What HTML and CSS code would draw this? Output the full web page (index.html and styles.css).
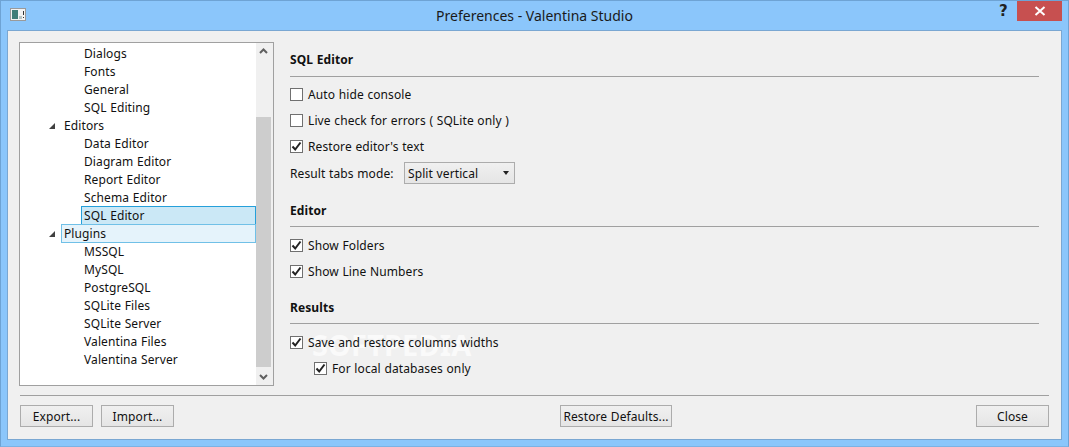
FILE: index.html
```html
<!DOCTYPE html>
<html lang="en">
<head>
<meta charset="utf-8">
<title>Preferences - Valentina Studio</title>
<link rel="stylesheet" href="styles.css">
</head>
<body>
<div class="window">
  <header class="titlebar">
    <svg class="appicon" width="16" height="13" viewBox="0 0 16 13"><rect x=".5" y=".5" width="15" height="12" fill="#f2f2f2" stroke="#9a9a9a"/><rect x="2" y="2" width="6" height="9" fill="#3f7d78"/><rect x="9" y="8" width="3" height="3" fill="#b8c4c4"/><rect x="13" y="3" width="1" height="4" fill="#333"/><rect x="13" y="9" width="1" height="1" fill="#333"/></svg>
    <div class="title">Preferences - Valentina Studio</div>
    <div class="help">?</div>
    <div class="close"><svg width="12" height="10" viewBox="0 0 12 10"><path d="M1.5 1 L10.5 9 M10.5 1 L1.5 9" stroke="#fff" stroke-width="2"/></svg></div>
  </header>
  <div class="panel">
    <div class="watermark">SOFTPEDIA</div>
    <div class="main">
      <div class="tree">
        <div class="rows">
          <div class="row l2">Dialogs</div>
          <div class="row l2">Fonts</div>
          <div class="row l2">General</div>
          <div class="row l2">SQL Editing</div>
          <div class="row l1"><span class="arrow"></span>Editors</div>
          <div class="row l2">Data Editor</div>
          <div class="row l2">Diagram Editor</div>
          <div class="row l2">Report Editor</div>
          <div class="row l2">Schema Editor</div>
          <div class="row l2"><span class="cell selected">SQL Editor</span></div>
          <div class="row l1"><span class="arrow"></span><span class="cell hover">Plugins</span></div>
          <div class="row l2">MSSQL</div>
          <div class="row l2">MySQL</div>
          <div class="row l2">PostgreSQL</div>
          <div class="row l2">SQLite Files</div>
          <div class="row l2">SQLite Server</div>
          <div class="row l2">Valentina Files</div>
          <div class="row l2">Valentina Server</div>
        </div>
        <div class="scrollbar">
          <svg class="sb-btn" width="15" height="16" viewBox="0 0 15 16"><path d="M4 10 L7.5 6.5 L11 10" fill="none" stroke="#606060" stroke-width="2"/></svg>
          <div class="track"><div class="thumb"></div></div>
          <svg class="sb-btn" width="15" height="16" viewBox="0 0 15 16"><path d="M4 6 L7.5 9.5 L11 6" fill="none" stroke="#606060" stroke-width="2"/></svg>
        </div>
      </div>
      <div class="settings">
        <section class="group first">
          <h2>SQL Editor</h2>
          <label class="check"><span class="box"></span>Auto hide console</label>
          <label class="check"><span class="box"></span>Live check for errors ( SQLite only )</label>
          <label class="check"><span class="box on"><svg width="11" height="11" viewBox="0 0 11 11"><path d="M1.5 5.5 L4.2 8.5 L9.5 1.5" fill="none" stroke="#222" stroke-width="2"/></svg></span>Restore editor's text</label>
          <div class="combo-row">
            <span class="combo-label">Result tabs mode:</span>
            <div class="combo"><span>Split vertical</span><span class="caret"></span></div>
          </div>
        </section>
        <section class="group">
          <h2>Editor</h2>
          <label class="check"><span class="box on"><svg width="11" height="11" viewBox="0 0 11 11"><path d="M1.5 5.5 L4.2 8.5 L9.5 1.5" fill="none" stroke="#222" stroke-width="2"/></svg></span>Show Folders</label>
          <label class="check"><span class="box on"><svg width="11" height="11" viewBox="0 0 11 11"><path d="M1.5 5.5 L4.2 8.5 L9.5 1.5" fill="none" stroke="#222" stroke-width="2"/></svg></span>Show Line Numbers</label>
        </section>
        <section class="group last">
          <h2>Results</h2>
          <label class="check"><span class="box on"><svg width="11" height="11" viewBox="0 0 11 11"><path d="M1.5 5.5 L4.2 8.5 L9.5 1.5" fill="none" stroke="#222" stroke-width="2"/></svg></span>Save and restore columns widths</label>
          <label class="check sub"><span class="box on"><svg width="11" height="11" viewBox="0 0 11 11"><path d="M1.5 5.5 L4.2 8.5 L9.5 1.5" fill="none" stroke="#222" stroke-width="2"/></svg></span>For local databases only</label>
        </section>
      </div>
    </div>
    <footer class="footer">
      <div class="btns"><button class="btn">Export...</button><button class="btn">Import...</button></div>
      <button class="btn wide">Restore Defaults...</button>
      <button class="btn closebtn">Close</button>
    </footer>
  </div>
</div>
</body>
</html>
```

FILE: styles.css
```css
* { box-sizing: border-box; }
html, body { margin: 0; height: 100%; }
body { font-family: "Noto Sans", "DejaVu Sans", sans-serif; font-size: 12px; letter-spacing: .1px; word-spacing: .4px; color: #111; overflow: hidden; }
.window { width: 1069px; height: 447px; background: #8bc6fb; border: 1px solid #6ea3d4; border-bottom-color: #7cb2e4; display: flex; flex-direction: column; padding: 0 6px 6px; }
.titlebar { height: 29px; flex: none; display: flex; position: relative; margin: 0 -6px; padding-left: 9px; }
.appicon { margin-top: 7px; flex: none; }
.title { position: absolute; left: 0; right: 0; top: 5px; text-align: center; font-size: 14px; line-height: 19px; letter-spacing: 0; word-spacing: 0; color: #1a1a1a; }
.help { position: absolute; left: 998px; top: 0; font: bold 15px/20px "DejaVu Sans", sans-serif; color: #222; }
.close { position: absolute; left: 1016px; top: 0; width: 45px; height: 20px; background: #c75050; display: flex; align-items: center; justify-content: center; }
.panel { flex: 1; background: #f0f0f0; border: 1px solid #7aa7d2; padding: 11px 12px 0 11px; position: relative; display: flex; flex-direction: column; }
.main { display: flex; height: 344px; position: relative; z-index: 1; }
.tree { width: 255px; height: 344px; flex: none; background: #fff; border: 1px solid #a0a0a0; display: flex; }
.rows { flex: 1; min-width: 0; padding-top: 2px; }
.row { height: 18px; line-height: 18px; display: flex; white-space: nowrap; position: relative; }
.l2 { padding-left: 64px; }
.l1 { padding-left: 44px; }
.arrow { position: absolute; left: 29px; top: 6px; width: 0; height: 0; border-style: solid; border-width: 0 0 6px 6px; border-color: transparent transparent #404040 transparent; }
.cell { display: block; height: 19px; line-height: 17px; flex: 1; border: 1px solid; padding-left: 2px; margin: -1px 0 0 -3px; }
.selected { background: #cbe8f6; border-color: #26a0da; }
.hover { background: #e5f3fb; border-color: #70c0e7; }
.scrollbar { width: 17px; flex: none; background: #f0f0f0; display: flex; flex-direction: column; padding: 0 2px 0 0; }
.sb-btn { flex: none; }
.track { flex: 1; padding-top: 58px; }
.thumb { height: 250px; background: #cdcdcd; }
.settings { flex: 1; margin-left: 16px; margin-right: 10px; min-width: 0; }
.group { margin-top: 16px; }
.group.first { margin-top: 9px; }
.group.last { margin-top: 14px; }
h2 { margin: 0 0 5px; font-size: 12px; font-weight: 700; line-height: 20px; height: 26px; padding-bottom: 5px; border-bottom: 1px solid #a0a0a0; color: #111; }
.first h2 { margin-bottom: 4px; line-height: 18px; }
.check { display: flex; align-items: center; height: 26px; white-space: nowrap; }
.check.sub { padding-left: 24px; }
.box { width: 13px; height: 13px; flex: none; background: #fff; border: 1px solid #707070; margin-right: 5px; display: flex; align-items: center; justify-content: center; }
.combo-row { display: flex; align-items: center; height: 24px; margin-top: 2px; }
.combo-label { width: 114px; flex: none; }
.combo { width: 111px; height: 22px; border: 1px solid #acacac; background: linear-gradient(#f0f0f0, #e5e5e5); display: flex; align-items: center; justify-content: space-between; padding: 0 3px; }
.caret { width: 0; height: 0; border-style: solid; border-width: 4px 3.5px 0 3.5px; border-color: #222 transparent transparent transparent; margin-right: 2px; }
.footer { margin-top: 9px; padding-top: 9px; margin-left: 1px; border-top: 1px solid #a0a0a0; display: flex; align-items: flex-start; position: relative; z-index: 1; }
.btns { display: flex; gap: 8px; }
.btn { width: 73px; height: 22px; padding: 0; font: inherit; letter-spacing: inherit; word-spacing: inherit; color: #111; border: 1px solid #acacac; background: linear-gradient(#f0f0f0, #e5e5e5); }
.btn.wide { width: 112px; margin-left: 386px; }
.closebtn { margin-left: auto; }
.watermark { position: absolute; left: 304px; top: 298px; font-size: 29px; line-height: 32px; font-weight: 700; color: #fafafa; pointer-events: none; }
```
